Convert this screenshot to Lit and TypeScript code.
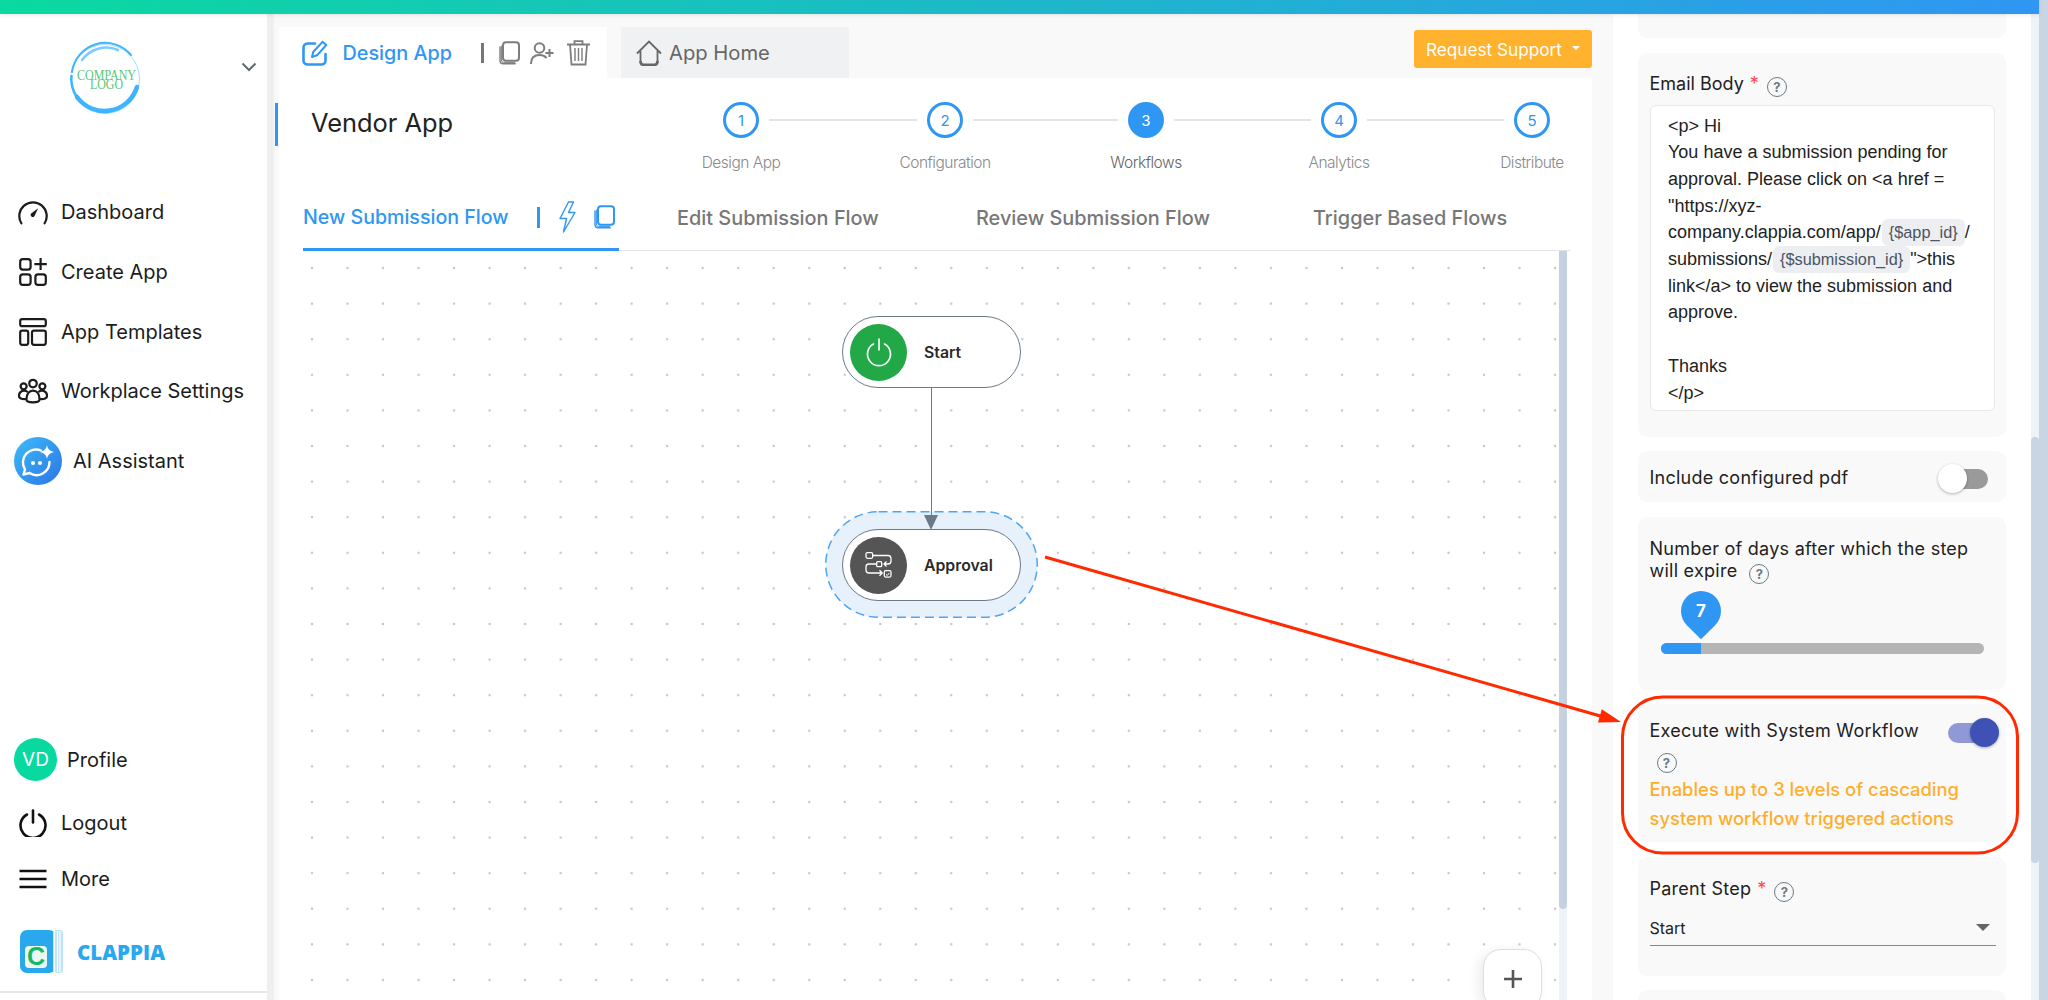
import { LitElement, html, css, svg } from 'lit';
import { customElement } from 'lit/decorators.js';

// icons used in more than one place
const copyIcon = (color: string) => html`
  <svg width="22" height="24" viewBox="0 0 22 24" fill="none" stroke=${color}>
    <rect x="5" y="1.2" width="16" height="18.5" rx="3" stroke-width="2"></rect>
    <path d="M2 6v13.5c0 2 1.2 3.2 3.2 3.2h12" stroke-width="1.4" stroke-linecap="round"></path>
    <path d="M3.4 5v14c0 1.6 1 2.4 2.4 2.4h11" stroke-width="1" stroke-linecap="round"></path>
  </svg>`;

@customElement('side-nav')
export class SideNav extends LitElement {
  static styles = css`
    :host {
      display: flex;
      flex-direction: column;
      width: 267px;
      height: 986px;
      background: #fff;
      color: #1c1c1c;
      font-size: 20px;
    }
    .brand {
      display: flex;
      height: 168.5px;
      padding: 28px 0 0 69px;
      box-sizing: border-box;
    }
    .logo {
      overflow: visible;
    }
    .chevron {
      margin: 20px 0 0 100px;
    }
    .item {
      display: flex;
      align-items: center;
      height: 59.7px;
      padding-left: 18px;
    }
    .item .glyph {
      display: flex;
      justify-content: center;
      width: 30px;
      margin-right: 13px;
    }
    .ai {
      display: flex;
      align-items: center;
      height: 60px;
      margin-top: 10px;
      padding-left: 14px;
    }
    .ai span {
      margin-left: 11px;
    }
    .bottom {
      margin-top: auto;
    }
    .profile {
      display: flex;
      align-items: center;
      padding-left: 14px;
      height: 43px;
    }
    .avatar {
      display: flex;
      align-items: center;
      justify-content: center;
      width: 43px;
      height: 43px;
      margin-right: 10px;
      border-radius: 50%;
      background: #08d9a0;
      color: #fff;
      font-size: 19px;
    }
    .logout {
      height: 56px;
      margin-top: 14px;
    }
    .more {
      height: 56px;
    }
    .clappia {
      display: flex;
      align-items: center;
      height: 43px;
      margin: 23px 0 18px 20px;
      color: #29a8ee;
      font-family: 'Open Sans', sans-serif;
      font-size: 20.5px;
      font-weight: 800;
    }
    .clappia span {
      margin-left: 14px;
    }
    .rule {
      height: 2px;
      margin-bottom: 7px;
      background: #e6e6e6;
    }
  `;

  render() {
    return html`
      <div class="brand">
        <svg class="logo" width="72" height="74" viewBox="0 0 72 74" fill="none">
          <circle cx="36" cy="37" r="34.5" stroke="#a9dcff" stroke-width="1"></circle>
          <path d="M8 55a34 34 0 0 0 60-10" stroke="#3bb5ff" stroke-width="4.5" stroke-linecap="round"></path>
          <path d="M3 30a33.500 33.500 0 0 1 59-17" stroke="#3bb5ff" stroke-width="2" stroke-linecap="round"></path>
          <path d="M13 18a30 30 0 0 1 36-10" stroke="#7cccff" stroke-width="2.6" stroke-linecap="round"></path>
          <path d="M2.500 33a34 34 0 0 0 6 23" stroke="#3bb5ff" stroke-width="2.4"></path>
          <text x="8" y="37.5" fill="#58c878" font-family="Liberation Serif" font-size="14" textLength="59" lengthAdjust="spacingAndGlyphs">COMPANY</text>
          <text x="21" y="47" fill="#58c878" font-family="Liberation Serif" font-size="14" textLength="33" lengthAdjust="spacingAndGlyphs">LOGO</text>
        </svg>
        <svg class="chevron" width="16" height="10" viewBox="0 0 16 10" fill="none" stroke="#5f6b75" stroke-width="2">
          <path d="M1.5 1.5 8 8l6.5-6.5"></path>
        </svg>
      </div>

      <div class="item">
        <span class="glyph">
          <svg width="32" height="26" viewBox="0 0 32 26" fill="none" stroke="#1c1c1c" stroke-width="2.4">
            <path d="M3.6 25A14.6 14.6 0 1 1 28.4 25" stroke-linecap="round"></path>
            <path d="M14 14.5 21.5 9l-4 8.5a2.3 2.3 0 0 1-3.5-3z" fill="#1c1c1c" stroke="none"></path>
          </svg>
        </span>
        Dashboard
      </div>
      <div class="item">
        <span class="glyph">
          <svg width="28" height="28" viewBox="0 0 28 28" fill="none" stroke="#1c1c1c" stroke-width="2.2">
            <rect x="1.2" y="1.2" width="10.4" height="10.4" rx="2.6"></rect>
            <rect x="1.2" y="16.4" width="10.4" height="10.4" rx="2.6"></rect>
            <rect x="16.4" y="16.4" width="10.4" height="10.4" rx="2.6"></rect>
            <path d="M21.6 0v12M15.4 6.2h12.4"></path>
          </svg>
        </span>
        Create App
      </div>
      <div class="item">
        <span class="glyph">
          <svg width="28" height="28" viewBox="0 0 28 28" fill="none" stroke="#1c1c1c" stroke-width="2.2">
            <rect x="1.2" y="1.2" width="25.6" height="7" rx="2"></rect>
            <rect x="1.2" y="12.6" width="8" height="14.2" rx="2"></rect>
            <rect x="13" y="12.6" width="13.8" height="14.2" rx="2"></rect>
          </svg>
        </span>
        App Templates
      </div>
      <div class="item">
        <span class="glyph">
          <svg width="32" height="27" viewBox="0 0 32 27" fill="none" stroke="#1c1c1c" stroke-width="2.4">
            <circle cx="16" cy="5" r="4"></circle>
            <circle cx="6" cy="8" r="3.2"></circle>
            <circle cx="26" cy="8" r="3.2"></circle>
            <path d="M9 22c0-6 3-9.500 7-9.500s7 3.500 7 9.500c0 4-14 4-14 0z"></path>
            <path d="M8.500 21.500C4 22 1 20.500 1 18c0-3 2.500-5.500 5.500-5.500 1.500 0 2.800.500 3.800 1.500"></path>
            <path d="M23.500 21.500C28 22 31 20.500 31 18c0-3-2.500-5.500-5.500-5.500-1.500 0-2.800.500-3.800 1.500"></path>
          </svg>
        </span>
        Workplace Settings
      </div>
      <div class="ai">
        <svg width="48" height="48" viewBox="0 0 48 48" fill="none">
          <defs>
            <linearGradient id="ai" x1="0" y1="0" x2="1" y2="1">
              <stop offset="0" stop-color="#3dbcf7"></stop>
              <stop offset="1" stop-color="#2c74e6"></stop>
            </linearGradient>
          </defs>
          <circle cx="24" cy="24" r="24" fill="url(#ai)"></circle>
          <path d="M27 13.500A13 13 0 0 0 11 32.500L9.500 37.500 15.500 36A13 13 0 0 0 35.500 25" stroke="#fff" stroke-width="2.4" stroke-linejoin="round" stroke-linecap="round"></path>
          <circle cx="19" cy="26" r="2" fill="#fff"></circle>
          <circle cx="26" cy="26" r="2" fill="#fff"></circle>
          <path d="M33 8c.8 4 2.800 6 7 7-4.200 1-6.200 3-7 7-.8-4-2.800-6-7-7 4.200-1 6.200-3 7-7z" fill="#fff"></path>
        </svg>
        <span>AI Assistant</span>
      </div>

      <div class="bottom">
        <div class="profile"><span class="avatar">VD</span>Profile</div>
        <div class="item logout">
          <span class="glyph">
            <svg width="28" height="28" viewBox="0 0 28 28" fill="none" stroke="#111" stroke-width="2.6" stroke-linecap="round">
              <path d="M8 5.500a12.500 12.500 0 1 0 12 0"></path>
              <path d="M14 1.500v12"></path>
            </svg>
          </span>
          Logout
        </div>
        <div class="item more">
          <span class="glyph">
            <svg width="28" height="20" viewBox="0 0 28 20" fill="none" stroke="#111" stroke-width="2.4">
              <path d="M.5 2h27M.5 10h27M.5 18h27"></path>
            </svg>
          </span>
          More
        </div>
        <div class="clappia">
          <svg width="43" height="43" viewBox="0 0 43 43">
            <rect x="0" y="0" width="36" height="43" rx="7" fill="#29a8ee"></rect>
            <rect x="33" y="0" width="10" height="43" rx="3" fill="#bfe4fa"></rect>
            <path d="M34.5 0v43M37.5 1v41M40 1v41" stroke="#fff" stroke-width="1.2"></path>
            <rect x="5" y="16" width="22" height="22" rx="4" fill="#eaf8f0"></rect>
            <text x="16" y="35" text-anchor="middle" fill="#15b866" font-family="Liberation Sans" font-weight="700" font-size="25">C</text>
          </svg>
          <span>CLAPPIA</span>
        </div>
        <div class="rule"></div>
      </div>
    `;
  }
}

const STEPS = ['Design App', 'Configuration', 'Workflows', 'Analytics', 'Distribute'];
const STEP_LINES = [148, 145, 137, 137];

@customElement('flow-editor')
export class FlowEditor extends LitElement {
  static styles = css`
    :host {
      display: flex;
      flex-direction: column;
      width: 1338px;
      height: 986px;
      padding: 13px 21px 0 4px;
      box-sizing: border-box;
      background: #f9f9f9;
    }
    .tabs {
      display: flex;
      height: 51px;
      flex: none;
    }
    .tab {
      display: flex;
      align-items: center;
      font-size: 20px;
      font-weight: 500;
    }
    .tab.design {
      width: 328px;
      padding-left: 23px;
      box-sizing: border-box;
      background: #fff;
      color: #2f96f3;
    }
    .tab.design b {
      margin: 0 29px 0 14.5px;
      font-size: 19.8px;
      font-weight: 500;
    }
    .tab.design .bar {
      width: 3px;
      height: 20px;
      margin-right: 14px;
      background: #777;
    }
    .tab.design svg + svg {
      margin-left: 10px;
    }
    .tab.design svg.trash {
      margin-left: 13px;
    }
    .tab.home {
      width: 228px;
      margin-left: 14px;
      padding-left: 15px;
      box-sizing: border-box;
      background: #f0f1f3;
      color: #666;
      font-size: 20.2px;
      font-weight: 400;
    }
    .tab.home span {
      margin-left: 7px;
    }
    .support {
      display: flex;
      align-items: center;
      justify-content: center;
      width: 178px;
      height: 38px;
      margin: 3px 0 0 auto;
      border-radius: 3px;
      background: #ffb22e;
      color: #fff;
      font-size: 17.2px;
    }
    .support i {
      width: 0;
      height: 0;
      margin-left: 10px;
      margin-bottom: 3px;
      border: 4.5px solid transparent;
      border-top-color: #fff;
      border-bottom: 0;
    }
    .card {
      display: flex;
      flex-direction: column;
      flex: 1;
      min-height: 0;
      background: #fff;
    }
    .head {
      display: flex;
      align-items: flex-start;
      flex: none;
      height: 112px;
      padding: 24px 42px 0 0;
      box-sizing: border-box;
    }
    .title {
      display: flex;
      align-items: center;
      height: 43px;
      margin: 1px 0 0 -4px;
      padding: 0 0 4px 33px;
      border-left: 3px solid #2f96f3;
      box-sizing: border-box;
      color: #222;
      font-size: 25.4px;
    }
    .stepper {
      display: flex;
      margin-left: auto;
    }
    .step {
      display: flex;
      flex-direction: column;
      align-items: center;
      width: 36px;
    }
    .dot {
      display: flex;
      align-items: center;
      justify-content: center;
      flex: none;
      width: 36px;
      height: 36px;
      border: 3px solid #2f96f3;
      border-radius: 50%;
      box-sizing: border-box;
      color: #2f96f3;
      font-size: 15px;
    }
    .step.on .dot {
      background: #2f96f3;
      color: #fff;
    }
    .step label {
      margin-top: 15px;
      line-height: 20px;
      color: #8a8a8a;
      font-size: 15.5px;
      font-weight: 300;
      letter-spacing: -0.5px;
      white-space: nowrap;
    }
    .step.on label {
      color: #666;
    }
    .link {
      height: 1.5px;
      margin: 17px 10px 0;
      background: #e4e4e4;
    }
    .flow-tabs {
      display: grid;
      grid-template-columns: 374px 299px 337px 1fr;
      flex: none;
      height: 61px;
      margin: 0 22px 0 24px;
      border-bottom: 1.5px solid #e4e4e4;
      box-sizing: border-box;
      color: #777;
      font-size: 19.9px;
      font-weight: 500;
    }
    .flow-tabs > div {
      display: flex;
      align-items: center;
      padding-bottom: 6px;
      box-sizing: border-box;
    }
    .flow-tabs .active {
      width: 316px;
      height: 61px;
      padding-bottom: 4px;
      border-bottom: 3px solid #2f96f3;
      color: #2f96f3;
      font-size: 19.6px;
    }
    .active .bar {
      width: 3px;
      height: 21px;
      margin: 0 19px 0 28px;
      background: #2f96f3;
    }
    .active svg + svg {
      margin-left: 17px;
    }
    .canvas {
      position: relative;
      flex: 1;
      min-height: 0;
      margin: 0 25px 0 24px;
      overflow: hidden;
      background-image: radial-gradient(circle, #c6c6c6 1.2px, transparent 1.6px);
      background-size: 35.53px 35.6px;
      background-position: -8.75px -0.75px;
    }
    .scroll {
      position: absolute;
      top: 0;
      right: 0;
      bottom: 0;
      width: 8px;
      background: #eef3f9;
    }
    .scroll i {
      display: block;
      height: 658px;
      border-radius: 0 0 4px 4px;
      background: #c5d1e0;
    }
    .halo {
      position: absolute;
      left: 522px;
      top: 260px;
    }
    .edge {
      position: absolute;
      left: 628px;
      top: 137px;
      width: 1.3px;
      height: 130px;
      background: #6b7a86;
    }
    .node {
      position: absolute;
      left: 539px;
      display: flex;
      align-items: center;
      width: 179px;
      height: 72px;
      padding-left: 7px;
      border: 1.4px solid #6b7a86;
      border-radius: 36px;
      box-sizing: border-box;
      background: #fff;
      color: #2a2a2a;
      font-size: 15.8px;
      font-weight: 600;
    }
    .node.start {
      top: 65px;
    }
    .node.approval {
      top: 278px;
    }
    .node .disc {
      display: flex;
      align-items: center;
      justify-content: center;
      width: 57px;
      height: 57px;
      margin-right: 17px;
      border-radius: 50%;
    }
    .arrow {
      position: absolute;
      left: 621px;
      top: 264px;
      width: 0;
      height: 0;
      border-left: 7.5px solid transparent;
      border-right: 7.5px solid transparent;
      border-top: 15px solid #6b7a86;
    }
    .plus {
      position: absolute;
      left: 1180px;
      top: 698px;
      display: flex;
      align-items: center;
      justify-content: center;
      width: 59px;
      height: 60px;
      border: 1.5px solid #dedede;
      border-radius: 18px;
      box-sizing: border-box;
      background: #fff;
      box-shadow: -4px 2px 12px rgba(0, 0, 0, 0.08);
    }
  `;

  render() {
    return html`
      <div class="tabs">
        <div class="tab design">
          <svg width="26" height="26" viewBox="0 0 26 26" fill="none" stroke="#2f96f3" stroke-width="2.6">
            <path d="M13 3.500H5.500a4 4 0 0 0-4 4v13a4 4 0 0 0 4 4h14a4 4 0 0 0 4-4V14" stroke-linecap="round"></path>
            <path d="M10 17l1.200-5L20.500 1.800l3.800 3.200-9.300 10.300z" stroke-width="2" stroke-linejoin="round"></path>
          </svg>
          <b>Design App</b>
          <span class="bar"></span>
          ${copyIcon('#7d7d7d')}
          <svg width="24" height="22" viewBox="0 0 24 22" fill="none" stroke="#7d7d7d" stroke-width="2">
            <circle cx="9.500" cy="6" r="4.800"></circle>
            <path d="M1 21.500c0-6 3.500-8.500 8.500-8.500 3 0 5 .800 6.500 2.500" stroke-linecap="round"></path>
            <path d="M19.500 7v8M15.500 11h8"></path>
          </svg>
          <svg class="trash" width="23" height="26" viewBox="0 0 23 26" fill="none" stroke="#7d7d7d" stroke-width="1.8">
            <path d="M0 4.500h23M7.500 4.500V1.200h8v3.300"></path>
            <path d="M3 4.500l1.500 20h14l1.500-20"></path>
            <path d="M8 8v13M11.500 8v13M15 8v13" stroke-width="1.4"></path>
          </svg>
        </div>
        <div class="tab home">
          <svg width="26" height="26" viewBox="0 0 26 26" fill="none" stroke="#666" stroke-width="1.8">
            <path d="M1 13.500 13 1.500l12 12M4.500 11v11.500M21.500 11v11.500"></path>
            <path d="M4.500 21c0 3 1 3.800 3 3.800h11c2 0 3-.800 3-3.800" stroke-width="2.6"></path>
          </svg>
          <span>App Home</span>
        </div>
        <div class="support">Request Support<i></i></div>
      </div>

      <div class="card">
        <div class="head">
          <div class="title">Vendor App</div>
          <div class="stepper">
            ${STEPS.map(
              (name, i) => html`
                <div class="step ${i === 2 ? 'on' : ''}">
                  <span class="dot">${i + 1}</span>
                  <label>${name}</label>
                </div>
                ${i < STEP_LINES.length
                  ? html`<span class="link" style="width:${STEP_LINES[i]}px"></span>`
                  : ''}
              `
            )}
          </div>
        </div>

        <div class="flow-tabs">
          <div class="active">
            New Submission Flow
            <span class="bar"></span>
            <svg width="17" height="32" viewBox="0 0 17 32" fill="none" stroke="#2f96f3" stroke-width="1.4" stroke-linejoin="round">
              <path d="M9.500 1 1 17.500h6.500L4.500 31 16 11.500H9.500L14.500 1z"></path>
            </svg>
            ${copyIcon('#2f96f3')}
          </div>
          <div>Edit Submission Flow</div>
          <div>Review Submission Flow</div>
          <div>Trigger Based Flows</div>
        </div>

        <div class="canvas">
          <svg class="halo" width="213" height="107" viewBox="0 0 213 107">
            <rect x="0.75" y="0.75" width="211.5" height="105.5" rx="52.75" fill="#e7f1fc" stroke="#4ea5f5" stroke-width="1.5" stroke-dasharray="9 5"></rect>
          </svg>
          <div class="edge"></div>
          <div class="node start">
            <span class="disc" style="background:#22a846">
              <svg width="28" height="29" viewBox="0 0 28 29" fill="none" stroke="#fff" stroke-width="1.6" stroke-linecap="round">
                <path d="M8.500 6a11.500 11.500 0 1 0 11 0"></path>
                <path d="M14 1v11"></path>
              </svg>
            </span>
            Start
          </div>
          <div class="node approval">
            <span class="disc" style="background:#555">
              <svg width="57" height="57" viewBox="0 0 57 57" fill="none" stroke="#fff" stroke-width="1.3">
                <rect x="16" y="15.700" width="6.700" height="5.600" rx="1.500"></rect>
                <path d="M22.700 18.500H38c2 0 3 1.500 3 3.500v2c0 2-1 3-3 3h-4M36.500 24.500 34 27l2.500 2.500"></path>
                <rect x="26.700" y="24.700" width="5" height="5" rx="1"></rect>
                <path d="M26.700 27H19c-2 0-3 1.300-3 3v3c0 2 1 3 3 3h13M29.500 33.300 32.200 36l-2.700 2.700"></path>
                <rect x="34.300" y="33.700" width="6.700" height="6.400" rx="1.500"></rect>
                <path d="M36 37.500l1.300 1 2-2.500" stroke-width="1"></path>
              </svg>
            </span>
            Approval
          </div>
          <div class="arrow"></div>
          <div class="plus">
            <svg width="18" height="18" viewBox="0 0 18 18" stroke="#555" stroke-width="2.6">
              <path d="M9 0v18M0 9h18"></path>
            </svg>
          </div>
          <div class="scroll"><i></i></div>
        </div>
      </div>
    `;
  }
}

@customElement('step-settings')
export class StepSettings extends LitElement {
  static styles = css`
    :host {
      display: flex;
      flex-direction: column;
      gap: 14.5px;
      width: 418px;
      height: 986px;
      padding: 0 25px;
      box-sizing: border-box;
      overflow: hidden;
      background: #fff;
      color: #222;
      font-size: 18px;
    }
    .box {
      flex: none;
      width: 368px;
      padding: 0 11.5px;
      border-radius: 9px;
      box-sizing: border-box;
      background: #f9f9f9;
    }
    .box.first {
      height: 24px;
      border-radius: 0 0 9px 9px;
    }
    .box.email {
      height: 384px;
      padding-top: 20px;
    }
    .box.pdf {
      display: flex;
      align-items: center;
      justify-content: space-between;
      height: 51px;
      padding-top: 2px;
    }
    .box.days {
      height: 173px;
      padding-top: 21px;
    }
    .box.system {
      height: 138px;
      padding-top: 15px;
    }
    .box.parent {
      height: 119px;
      padding-top: 21px;
    }
    .box.last {
      height: 40px;
    }
    .label {
      display: flex;
      align-items: center;
      height: 22px;
      letter-spacing: 0.25px;
      white-space: nowrap;
    }
    .email .label {
      letter-spacing: 0;
    }
    .req {
      margin: 0 8px 0 6px;
      color: #ff4b4b;
    }
    .help {
      display: flex;
      align-items: center;
      justify-content: center;
      flex: none;
      width: 20px;
      height: 20px;
      margin-top: 6px;
      border: 1.6px solid #6b7a86;
      border-radius: 50%;
      box-sizing: border-box;
      color: #6b7a86;
      font-size: 13px;
      font-weight: 700;
      letter-spacing: 0;
    }
    .days .help {
      margin-left: 12px;
    }
    .system .help {
      margin: 10px 0 0 7px;
    }
    .editor {
      height: 306px;
      margin: 10px 0 0 0.5px;
      padding: 7px 0 0 17px;
      border: 1.5px solid #e8e8e8;
      border-radius: 6px;
      box-sizing: border-box;
      background: #fff;
      font-family: 'Liberation Sans', Arial, sans-serif;
      font-size: 18px;
      line-height: 26.7px;
      white-space: nowrap;
    }
    .chip {
      display: inline-block;
      height: 26.7px;
      margin-left: 1px;
      padding: 0 7px;
      border-radius: 6px;
      background: #eceef2;
      color: #4b5563;
      font-size: 16.3px;
      line-height: 26.7px;
      vertical-align: top;
    }
    .toggle {
      position: relative;
      flex: none;
      width: 42px;
      height: 20px;
      border-radius: 10px;
    }
    .toggle i {
      position: absolute;
      top: -5px;
      width: 29px;
      height: 29px;
      border-radius: 50%;
      box-shadow: 0 1px 3px rgba(0, 0, 0, 0.3);
    }
    .toggle.off {
      margin: 3px 7px 0 0;
      background: #9a9a9a;
    }
    .toggle.off i {
      left: -8px;
      background: #fff;
    }
    .toggle.on {
      margin: 4px 4.5px 0 0;
      background: #9099d6;
    }
    .toggle.on i {
      right: -9px;
      background: #3f51b5;
    }
    .top-row {
      display: flex;
      align-items: flex-start;
      justify-content: space-between;
    }
    .slider {
      position: relative;
      width: 323px;
      height: 11px;
      margin: 61px 0 0 11px;
      border-radius: 6px;
      background: #b5b5b5;
    }
    .fill {
      width: 40px;
      height: 11px;
      border-radius: 6px 0 0 6px;
      background: #2f96f3;
    }
    .pin {
      position: absolute;
      left: 20px;
      top: -52px;
      display: flex;
      align-items: center;
      justify-content: center;
      width: 40px;
      height: 40px;
      border-radius: 50% 50% 0 50%;
      background: #2f96f3;
      transform: rotate(45deg);
    }
    .pin span {
      color: #fff;
      font-size: 17px;
      font-weight: 700;
      transform: rotate(-45deg);
    }
    .note {
      margin-top: 2px;
      color: #ffae2c;
      font-size: 18.4px;
      font-weight: 500;
      line-height: 28.5px;
      white-space: nowrap;
    }
    .select {
      display: flex;
      align-items: center;
      justify-content: space-between;
      width: 346px;
      height: 35px;
      margin-top: 11px;
      padding: 0 6px 0 0;
      border-bottom: 1.5px solid #888;
      box-sizing: border-box;
      font-size: 16px;
    }
    .select i {
      width: 0;
      height: 0;
      border-left: 7px solid transparent;
      border-right: 7px solid transparent;
      border-top: 7px solid #666;
    }
  `;

  render() {
    return html`
      <div class="box first"></div>

      <div class="box email">
        <div class="label">Email Body<span class="req">*</span><span class="help">?</span></div>
        <div class="editor">
          &lt;p&gt; Hi<br />
          You have a submission pending for<br />
          approval. Please click on &lt;a href =<br />
          "https://xyz-<br />
          company.clappia.com/app/<span class="chip">{$app_id}</span>/<br />
          submissions/<span class="chip">{$submission_id}</span>"&gt;this<br />
          link&lt;/a&gt; to view the submission and<br />
          approve.<br />
          <br />
          Thanks<br />
          &lt;/p&gt;
        </div>
      </div>

      <div class="box pdf">
        <span class="label">Include configured pdf</span>
        <span class="toggle off"><i></i></span>
      </div>

      <div class="box days">
        <div class="label">Number of days after which the step</div>
        <div class="label">will expire<span class="help">?</span></div>
        <div class="slider">
          <div class="fill"></div>
          <div class="pin"><span>7</span></div>
        </div>
      </div>

      <div class="box system">
        <div class="top-row">
          <span class="label">Execute with System Workflow</span>
          <span class="toggle on"><i></i></span>
        </div>
        <div class="help">?</div>
        <div class="note">Enables up to 3 levels of cascading<br />system workflow triggered actions</div>
      </div>

      <div class="box parent">
        <div class="label">Parent Step<span class="req">*</span><span class="help">?</span></div>
        <div class="select">Start<i></i></div>
      </div>

      <div class="box last"></div>
    `;
  }
}

@customElement('app-root')
export class AppRoot extends LitElement {
  static styles = css`
    :host {
      display: block;
      position: relative;
      width: 2048px;
      height: 1000px;
      overflow: hidden;
      background: #fff;
      font-family: Inter, 'Noto Sans', sans-serif;
    }
    .shell {
      display: flex;
      height: 1000px;
    }
    .page {
      display: flex;
      flex-direction: column;
      flex: 1;
    }
    .rail {
      width: 9px;
      background: #c9d5e3;
    }
    .bar {
      position: relative;
      flex: none;
      height: 14px;
      background: linear-gradient(90deg, #0bd9a0, #2f96f3);
      box-shadow: 0 1px 4px rgba(0, 0, 0, 0.1);
    }
    .body {
      display: flex;
      flex: 1;
      min-height: 0;
    }
    .divider {
      width: 8px;
      background: linear-gradient(90deg, #eee 70%, #f9f9f9);
    }
    .thumb-track {
      width: 8px;
      background: #eef3f8;
    }
    .thumb-track i {
      display: block;
      height: 426px;
      margin-top: 423px;
      border-radius: 4px;
      background: #c9d5e3;
    }
    .marks {
      position: absolute;
      left: 0;
      top: 0;
      pointer-events: none;
    }
  `;

  render() {
    return html`
      <div class="shell">
        <div class="page">
          <div class="bar"></div>
          <div class="body">
            <side-nav></side-nav>
            <div class="divider"></div>
            <flow-editor></flow-editor>
            <step-settings></step-settings>
            <div class="thumb-track"><i></i></div>
          </div>
        </div>
        <div class="rail"></div>
      </div>
      <svg class="marks" width="2048" height="1000" viewBox="0 0 2048 1000" fill="none">
        ${svg`
          <rect x="1622.5" y="697" width="395" height="156" rx="40" stroke="#ff2a00" stroke-width="3"></rect>
          <path d="M1045 557 1602 716.5" stroke="#ff2a00" stroke-width="3"></path>
          <path d="M1621 722 1598 722.6 1601.8 709.2z" fill="#ff2a00"></path>
        `}
      </svg>
    `;
  }
}
